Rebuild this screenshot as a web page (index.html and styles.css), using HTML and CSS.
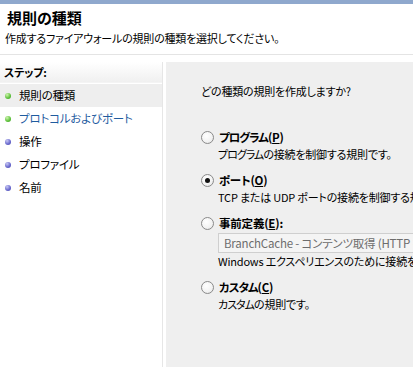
FILE: index.html
```html
<!DOCTYPE html>
<html lang="ja">
<head>
<meta charset="utf-8">
<link rel="stylesheet" href="styles.css">
</head>
<body>
<div class="topbar"></div>
<div class="header">
  <div class="title">規則の種類</div>
  <div class="subtitle">作成するファイアウォールの規則の種類を選択してください。</div>
</div>
<div class="sep"></div>
<div class="main">
  <div class="steps">
    <div class="steps-head">ステップ:</div>
    <div class="step active"><span class="dot green"></span>規則の種類</div>
    <div class="step link"><span class="dot green"></span>プロトコルおよびポート</div>
    <div class="step"><span class="dot blue"></span>操作</div>
    <div class="step"><span class="dot blue"></span>プロファイル</div>
    <div class="step"><span class="dot blue"></span>名前</div>
  </div>
  <div class="content">
    <div class="question">どの種類の規則を作成しますか?</div>
    <div class="option">
      <div class="opt-row"><span class="radio"></span><span class="label"><span class="kana">プログラム</span>(<u>P</u>)</span></div>
      <div class="desc"><span class="kana">プログラム</span>の接続を制御する規則です。</div>
    </div>
    <div class="option">
      <div class="opt-row"><span class="radio checked"></span><span class="label">ポート(<u>O</u>)</span></div>
      <div class="desc">TCP または UDP ポートの接続を制御する規則です。</div>
    </div>
    <div class="option">
      <div class="opt-row"><span class="radio"></span><span class="label">事前定義(<u>E</u>):</span></div>
      <div class="select">BranchCache - コンテンツ取得 (HTTP を使用)</div>
      <div class="desc tight">Windows エクスペリエンスのために接続を制御する規則です。</div>
    </div>
    <div class="option">
      <div class="opt-row"><span class="radio"></span><span class="label"><span class="kana">カスタム</span>(<u>C</u>)</span></div>
      <div class="desc"><span class="kana">カスタム</span>の規則です。</div>
    </div>
  </div>
</div>
</body>
</html>
```
FILE: styles.css
```css
html, body {
  margin: 0;
  padding: 0;
  width: 413px;
  height: 367px;
  overflow: hidden;
  background: #ffffff;
  font-family: "Noto Sans CJK JP", "Noto Sans", sans-serif;
  font-size: 11px;
  letter-spacing: -0.2px;
  font-feature-settings: "palt";
  color: #000;
}
.topbar {
  height: 4px;
  background: #8fa8cd;
}
.header {
  padding: 4px 0 0 5px;
  height: 46px;
}
.title {
  font-size: 15px;
  font-weight: bold;
  letter-spacing: 0;
  line-height: 20px;
  padding-left: 2px;
  color: #000;
}
.subtitle {
  margin-top: 2px;
  line-height: 16px;
  white-space: nowrap;
}
.sep {
  height: 1px;
  background: #e4e4e4;
  margin-bottom: 7px;
}
.main {
  display: flex;
  height: 305px;
}
.steps {
  width: 162px;
  border-right: 1px solid #e6e6e6;
  background: #fff;
}
.steps-head {
  height: 20px;
  line-height: 20px;
  padding-left: 4px;
  font-size: 11px;
  font-weight: bold;
  background: linear-gradient(#ffffff, #f0f0f0);
  border-bottom: 1px solid #f4f4f4;
  margin-bottom: 1px;
}
.step {
  height: 23px;
  line-height: 23px;
  display: flex;
  align-items: center;
  white-space: nowrap;
  font-size: 11.5px;
}
.step.active {
  background: #eeeeee;
}
.step.link {
  color: #1f5c9f;
}
.dot {
  width: 6px;
  height: 6px;
  border-radius: 50%;
  margin: 0 8px 0 5px;
}
.dot.green {
  background: radial-gradient(circle at 35% 30%, #d0f5b0, #5cc03a 60%, #3a9a22);
}
.dot.blue {
  background: radial-gradient(circle at 35% 30%, #c8c8f4, #6666cc 60%, #4a4aa8);
}
.content {
  flex: 1;
  margin-left: 3px;
  background: #efefef;
  padding: 21px 0 0 35px;
  white-space: nowrap;
  overflow: hidden;
}
.question {
  line-height: 16px;
  margin-bottom: 30px;
}
.option {
  margin-bottom: 10px;
}
.opt-row {
  display: flex;
  align-items: center;
  height: 16px;
}
.radio {
  width: 11px;
  height: 11px;
  border: 1px solid #8a8a8a;
  border-radius: 50%;
  background: radial-gradient(circle at 40% 35%, #ffffff, #f2f2f2 60%, #dcdcdc);
  margin-right: 5px;
  position: relative;
  box-sizing: content-box;
  flex: none;
}
.radio.checked::after {
  content: "";
  position: absolute;
  left: 3px;
  top: 3px;
  width: 5px;
  height: 5px;
  border-radius: 50%;
  background: #111;
}
.label {
  font-weight: bold;
  font-size: 11.5px;
}
.kana {
  letter-spacing: -1px;
}
.desc {
  padding-left: 17px;
  margin-top: 1px;
  line-height: 16px;
}
.desc.tight {
  margin-top: 0;
}
.select {
  margin: 2px 0 0 17px;
  height: 18px;
  line-height: 18px;
  border: 1px solid #cfcfcf;
  background: #f4f4f4;
  color: #6d6d6d;
  padding-left: 5px;
  width: 260px;
  font-size: 11.5px;
}
```
